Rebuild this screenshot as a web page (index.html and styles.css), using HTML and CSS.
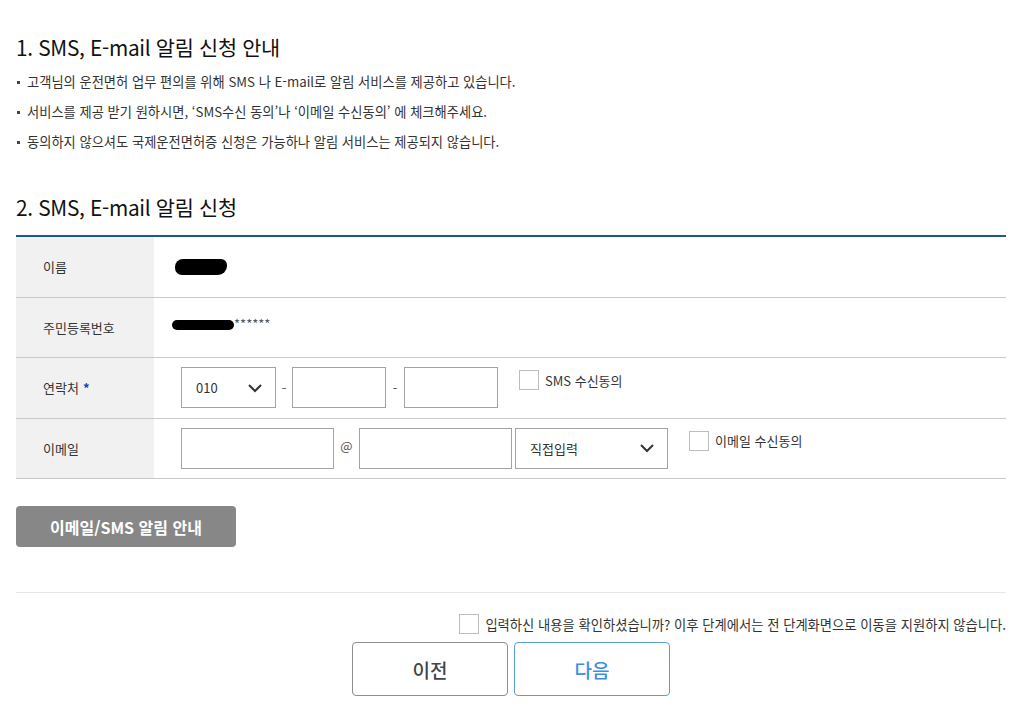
FILE: index.html
```html
<!DOCTYPE html>
<html lang="ko">
<head>
    <meta charset="UTF-8">
    <meta name="viewport" content="width=device-width, initial-scale=1.0">
    <title>SMS, E-mail 알림 신청</title>
    <link rel="stylesheet" href="styles.css">
</head>
<body>
    <div class="wrap">
        <h2 class="sec-title">1. SMS, E-mail 알림 신청 안내</h2>
        <ul class="notice">
            <li>고객님의 운전면허 업무 편의를 위해 SMS 나 E-mail로 알림 서비스를 제공하고 있습니다.</li>
            <li>서비스를 제공 받기 원하시면, ‘SMS수신 동의’나 ‘이메일 수신동의’ 에 체크해주세요.</li>
            <li>동의하지 않으셔도 국제운전면허증 신청은 가능하나 알림 서비스는 제공되지 않습니다.</li>
        </ul>

        <h2 class="sec-title second">2. SMS, E-mail 알림 신청</h2>
        <div class="form-table">
            <div class="row">
                <div class="th">이름</div>
                <div class="td"><span class="mask mask-name"></span></div>
            </div>
            <div class="row">
                <div class="th">주민등록번호</div>
                <div class="td"><span class="mask mask-ssn"></span><span class="stars">******</span></div>
            </div>
            <div class="row">
                <div class="th">연락처 <span class="req">*</span></div>
                <div class="td">
                    <div class="select sel-phone">
                        <span>010</span>
                        <svg width="16" height="10" viewBox="0 0 16 10"><path d="M2 2l6 6 6-6" fill="none" stroke="#333" stroke-width="2"/></svg>
                    </div>
                    <span class="dash">-</span>
                    <input type="text" class="inp inp-phone">
                    <span class="dash dash-wide">-</span>
                    <input type="text" class="inp inp-phone">
                    <label class="agree"><span class="chk"></span>SMS 수신동의</label>
                </div>
            </div>
            <div class="row">
                <div class="th">이메일</div>
                <div class="td">
                    <input type="text" class="inp inp-mail">
                    <span class="at">@</span>
                    <input type="text" class="inp inp-mail">
                    <div class="select sel-mail">
                        <span>직접입력</span>
                        <svg width="16" height="10" viewBox="0 0 16 10"><path d="M2 2l6 6 6-6" fill="none" stroke="#333" stroke-width="2"/></svg>
                    </div>
                    <label class="agree"><span class="chk"></span>이메일 수신동의</label>
                </div>
            </div>
        </div>

        <button class="guide-btn">이메일/SMS 알림 안내</button>

        <div class="confirm">
            <label class="confirm-chk"><span class="chk"></span>입력하신 내용을 확인하셨습니까? 이후 단계에서는 전 단계화면으로 이동을 지원하지 않습니다.</label>
        </div>
        <div class="nav-btns">
            <button class="nav-btn prev">이전</button>
            <button class="nav-btn next">다음</button>
        </div>
    </div>
</body>
</html>
```

FILE: styles.css
```css
body {
    margin: 0;
    background: #fff;
    color: #333;
    font-family: "Noto Sans CJK KR", "Noto Sans", sans-serif;
}
.wrap {
    padding: 33px 14px 0 16px;
}
.sec-title {
    margin: 0;
    font-size: 20.8px;
    line-height: 28px;
    font-weight: 400;
    color: #111;
    letter-spacing: -0.3px;
}
.sec-title.second {
    margin-top: 36px;
}
.notice {
    list-style: none;
    margin: 6px 0 0;
    padding: 0;
}
.notice li {
    position: relative;
    padding-left: 11px;
    font-size: 13.25px;
    line-height: 30px;
    color: #333;
}
.notice li::before {
    content: "";
    position: absolute;
    left: 1px;
    top: 14px;
    width: 3px;
    height: 3px;
    background: #444;
}
.form-table {
    margin-top: 14px;
    border-top: 2px solid #1d5796;
}
.row {
    display: flex;
    height: 59.5px;
    border-bottom: 1px solid #c9c9c9;
}
.th {
    width: 111px;
    padding-left: 27px;
    background: #f1f1f1;
    display: flex;
    align-items: center;
    font-size: 13px;
    color: #333;
}
.req {
    color: #1a3fb8;
    font-weight: 700;
    margin-left: 4px;
}
.td {
    flex: 1;
    display: flex;
    align-items: center;
    padding-left: 27px;
    font-size: 13px;
}
.mask {
    display: inline-block;
    background: #000;
}
.mask-name {
    width: 52px;
    height: 16px;
    border-radius: 8px 6px 9px 7px;
    margin-left: -6px;
}
.mask-ssn {
    width: 62px;
    height: 10px;
    border-radius: 6px;
    margin-left: -9px;
    margin-top: -4px;
}
.stars {
    font-size: 13px;
    color: #555;
    margin-top: -8px;
}
.select {
    box-sizing: border-box;
    height: 41px;
    border: 1px solid #a3a3a3;
    display: flex;
    align-items: center;
    justify-content: space-between;
    padding: 0 12px 0 14px;
    font-size: 13px;
    color: #333;
    background: #fff;
}
.sel-phone {
    width: 95px;
}
.sel-mail {
    width: 153px;
    margin-left: 3px;
}
.inp {
    box-sizing: border-box;
    height: 41px;
    border: 1px solid #a3a3a3;
    margin: 0;
    padding: 0 8px;
    background: #fff;
}
.inp-phone {
    width: 94px;
}
.inp-mail {
    width: 153px;
}
.dash {
    width: 16px;
    text-align: center;
    font-size: 13px;
    color: #555;
}
.dash-wide {
    width: 18px;
}
.at {
    width: 25px;
    text-align: center;
    font-size: 13px;
    color: #555;
    margin-top: -6px;
}
.agree {
    align-self: flex-start;
    margin-top: 12px;
    margin-left: 21px;
    display: flex;
    align-items: center;
    font-size: 13px;
    color: #333;
}
.chk {
    display: inline-block;
    box-sizing: border-box;
    width: 20px;
    height: 20px;
    border: 1px solid #bdbdbd;
    background: #fff;
    margin-right: 6px;
}
.guide-btn {
    margin-top: 27px;
    width: 220px;
    height: 41px;
    border: none;
    border-radius: 4px;
    background: #878787;
    color: #fff;
    font-family: inherit;
    font-size: 16px;
    font-weight: 700;
    cursor: pointer;
}
.confirm {
    margin-top: 45px;
    border-top: 1px solid #e7e7e7;
    padding-top: 21px;
    display: flex;
    justify-content: flex-end;
}
.confirm-chk {
    display: flex;
    align-items: center;
    font-size: 13.3px;
    color: #333;
}
.nav-btns {
    display: flex;
    justify-content: center;
    gap: 6px;
    margin-top: 8px;
}
.nav-btn {
    width: 156px;
    height: 54px;
    background: #fff;
    border-radius: 4px;
    font-family: inherit;
    font-size: 19px;
    font-weight: 500;
    cursor: pointer;
}
.prev {
    border: 1px solid #8e8e8e;
    color: #444;
}
.next {
    border: 1px solid #5a9be0;
    color: #3d8ee3;
}
```
